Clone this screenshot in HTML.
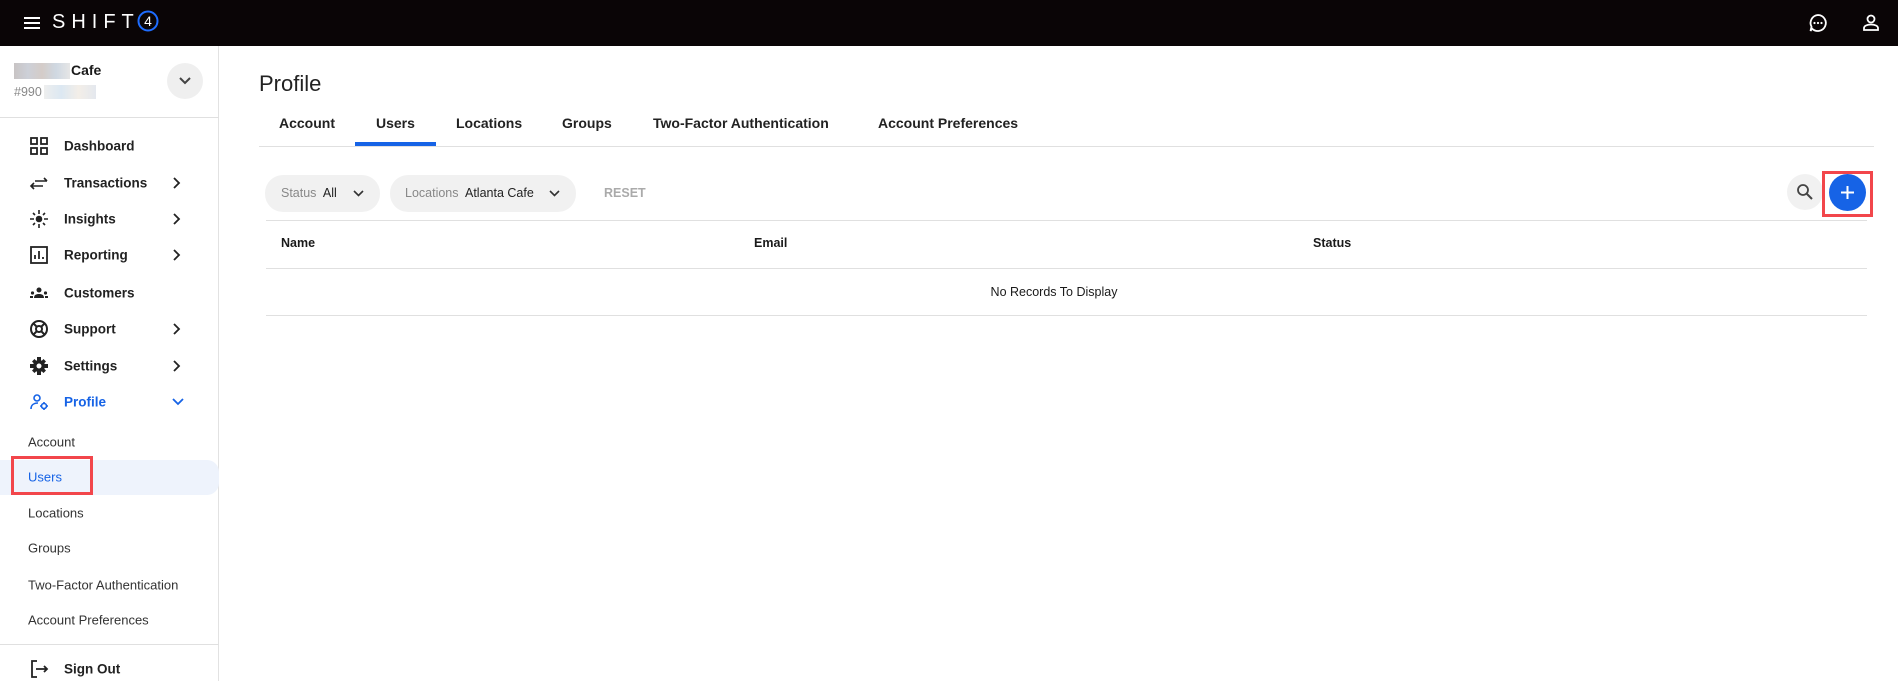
<!DOCTYPE html>
<html><head><meta charset="utf-8"><style>
*{margin:0;padding:0;box-sizing:border-box}
body{width:1898px;height:681px;overflow:hidden;background:#fff;font-family:"Liberation Sans",sans-serif;color:#1a1a1a;position:relative}
.abs{position:absolute}
.top{left:0;top:0;width:1898px;height:46px;background:#0a0506}
.side{left:0;top:46px;width:219px;height:635px;border-right:1px solid #e2e2e2}
.mi{position:absolute;left:64px;font-size:13.5px;font-weight:bold;color:#222;transform:translateY(-50%)}
.ic{position:absolute;left:29px;width:20px;height:20px;transform:translateY(-50%)}
.chev{position:absolute;left:173px;transform:translateY(-50%)}
.sub{position:absolute;left:28px;font-size:13px;color:#333;transform:translateY(-50%)}
.tab{position:absolute;top:123px;transform:translateY(-50%);font-size:14px;font-weight:bold;color:#222}
.th{position:absolute;top:243px;transform:translateY(-50%);font-size:12.5px;font-weight:bold}
.hl{position:absolute;height:2px;background:#e0e0e0}
</style></head><body>
<div class="abs top">
 <svg class="abs" style="left:23px;top:16px" width="18" height="14"><path d="M1 2h16M1 7h16M1 12h16" stroke="#fff" stroke-width="2"/></svg>
 <div class="abs" style="left:52px;top:11px;color:#fff;font-size:20px;letter-spacing:6px">SHIFT</div>
 <svg class="abs" style="left:137px;top:10px" width="22" height="22"><circle cx="11" cy="11" r="9.5" fill="none" stroke="#1e6dff" stroke-width="2"/><text x="11" y="16" fill="#fff" font-size="14" text-anchor="middle" font-family="Liberation Sans">4</text></svg>
 <svg class="abs" style="left:1808px;top:13px" width="20" height="20"><path d="M10 2a8 8 0 1 1-6 13.5L2.5 18l1-4.3A8 8 0 0 1 10 2z" fill="none" stroke="#fff" stroke-width="1.8"/><circle cx="6.5" cy="10" r="1.1" fill="#fff"/><circle cx="10" cy="10" r="1.1" fill="#fff"/><circle cx="13.5" cy="10" r="1.1" fill="#fff"/></svg>
 <svg class="abs" style="left:1862px;top:13px" width="18" height="20"><circle cx="9" cy="6" r="3.5" fill="none" stroke="#fff" stroke-width="1.8"/><path d="M2 17v-2c0-2 3-3.5 7-3.5s7 1.5 7 3.5v2z" fill="none" stroke="#fff" stroke-width="1.8"/></svg>
</div>
<div class="abs side"></div>
<div class="abs" style="left:14px;top:63px;width:56px;height:16px;background:linear-gradient(90deg,#c8c4c4,#cdd0d8,#d4ccc8,#cfd8e2,#e6e6e6)"></div>
<div class="abs" style="left:71px;top:62px;font-size:14px;font-weight:bold">Cafe</div>
<div class="abs" style="left:14px;top:85px;font-size:12.5px;color:#888">#990</div>
<div class="abs" style="left:44px;top:85px;width:52px;height:14px;background:linear-gradient(90deg,#eee,#dce8f2,#f3eee8,#e4e8ee)"></div>
<div class="abs" style="left:167px;top:63px;width:36px;height:36px;border-radius:50%;background:#efefef"></div>
<svg class="abs" style="left:179px;top:77px" width="12" height="8"><path d="M1 1l5 5 5-5" fill="none" stroke="#444" stroke-width="2"/></svg>
<div class="hl" style="left:0;top:117px;width:219px;height:1px"></div>

<svg class="ic" style="top:146px" viewBox="0 0 20 20"><g fill="none" stroke="#222" stroke-width="1.8"><rect x="2" y="2" width="6" height="6"/><rect x="12" y="2" width="6" height="6"/><rect x="2" y="12" width="6" height="6"/><rect x="12" y="12" width="6" height="6"/></g></svg>
<div class="mi" style="top:146px">Dashboard</div>
<svg class="ic" style="top:183px" viewBox="0 0 20 20"><g fill="none" stroke="#222" stroke-width="1.6"><path d="M6 8h12M15 5l3 3M2 13h12M5 10l-3 3 3 3"/></g></svg>
<div class="mi" style="top:183px">Transactions</div>
<svg class="ic" style="top:219px" viewBox="0 0 20 20"><g stroke="#222" stroke-width="1.6"><circle cx="10" cy="10" r="2.5" fill="#222"/><path d="M10 1v4M10 15v4M1 10h4M15 10h4M4 4l2 2M14 14l2 2M16 4l-2 2M4 16l2-2"/></g></svg>
<div class="mi" style="top:219px">Insights</div>
<svg class="ic" style="top:255px" viewBox="0 0 20 20"><g fill="none" stroke="#222" stroke-width="1.8"><rect x="2" y="2" width="16" height="16"/><path d="M6 14v-4M10 14V6M14 14v-2"/></g></svg>
<div class="mi" style="top:255px">Reporting</div>
<svg class="ic" style="top:293px" viewBox="0 0 20 20"><g fill="#222"><circle cx="10" cy="7" r="2.5"/><path d="M5 15c0-3 2-4 5-4s5 1 5 4z"/><circle cx="3.5" cy="10" r="1.6"/><circle cx="16.5" cy="10" r="1.6"/><rect x="1" y="13" width="3" height="2"/><rect x="16" y="13" width="3" height="2"/></g></svg>
<div class="mi" style="top:293px">Customers</div>
<svg class="ic" style="top:329px" viewBox="0 0 20 20"><g fill="none" stroke="#222" stroke-width="2"><circle cx="10" cy="10" r="8"/><circle cx="10" cy="10" r="3"/><path d="M4 4l4 4M16 4l-4 4M4 16l4-4M16 16l-4-4"/></g></svg>
<div class="mi" style="top:329px">Support</div>
<svg class="ic" style="top:366px" viewBox="0 0 20 20"><g fill="#222"><circle cx="10" cy="10" r="6"/><path d="M8 1h4v4H8zM8 15h4v4H8zM1 8h4v4H1zM15 8h4v4h-4zM3 5.5L5.5 3l3 3L6 8.5zM14.5 17l2.5-2.5-3-3-2.5 2.5zM17 5.5L14.5 3l-3 3L14 8.5zM5.5 17L3 14.5l3-3 2.5 2.5z"/></g><circle cx="10" cy="10" r="2.5" fill="#fff"/></svg>
<div class="mi" style="top:366px">Settings</div>
<svg class="ic" style="top:402px" viewBox="0 0 20 20"><g fill="none" stroke="#1663e6" stroke-width="1.6"><circle cx="8" cy="6" r="3"/><path d="M2 17c0-4 3-6 7-6"/><circle cx="15" cy="14" r="2.5"/><path d="M15 10v1.5M15 16.5V18M11 14h1.5M17.5 14H19"/></g></svg>
<div class="mi" style="top:402px;color:#1663e6">Profile</div>

<svg class="chev" style="top:183px" width="8" height="12"><path d="M1 1l5 5-5 5" fill="none" stroke="#222" stroke-width="1.8"/></svg>
<svg class="chev" style="top:219px" width="8" height="12"><path d="M1 1l5 5-5 5" fill="none" stroke="#222" stroke-width="1.8"/></svg>
<svg class="chev" style="top:255px" width="8" height="12"><path d="M1 1l5 5-5 5" fill="none" stroke="#222" stroke-width="1.8"/></svg>
<svg class="chev" style="top:329px" width="8" height="12"><path d="M1 1l5 5-5 5" fill="none" stroke="#222" stroke-width="1.8"/></svg>
<svg class="chev" style="top:366px" width="8" height="12"><path d="M1 1l5 5-5 5" fill="none" stroke="#222" stroke-width="1.8"/></svg>
<svg class="chev" style="top:402px;left:172px" width="12" height="8"><path d="M1 1l5 5 5-5" fill="none" stroke="#1663e6" stroke-width="1.8"/></svg>

<div class="abs" style="left:0;top:460px;width:219px;height:35px;background:#eef3fc;border-radius:0 12px 12px 0"></div>
<div class="sub" style="top:442px">Account</div>
<div class="sub" style="top:477px;color:#1663e6">Users</div>
<div class="sub" style="top:513px">Locations</div>
<div class="sub" style="top:548px">Groups</div>
<div class="sub" style="top:585px">Two-Factor Authentication</div>
<div class="sub" style="top:620px">Account Preferences</div>
<div class="abs" style="left:11px;top:456px;width:82px;height:39px;border:3px solid #f2464b"></div>
<div class="hl" style="left:0;top:644px;width:219px;height:1px"></div>
<svg class="ic" style="top:669px" viewBox="0 0 20 20"><g fill="none" stroke="#222" stroke-width="1.8"><path d="M8 2H3v16h5M7 10h11M15 7l3 3-3 3"/></g></svg>
<div class="mi" style="top:669px">Sign Out</div>

<div class="abs" style="left:259px;top:71px;font-size:22px;color:#222">Profile</div>
<div class="tab" style="left:279px">Account</div>
<div class="tab" style="left:376px">Users</div>
<div class="tab" style="left:456px">Locations</div>
<div class="tab" style="left:562px">Groups</div>
<div class="tab" style="left:653px">Two-Factor Authentication</div>
<div class="tab" style="left:878px">Account Preferences</div>
<div class="hl" style="left:259px;top:146px;width:1615px;height:1px"></div>
<div class="abs" style="left:355px;top:142px;width:81px;height:4px;background:#1663e6"></div>

<div class="abs" style="left:265px;top:175px;width:115px;height:37px;border-radius:18px;background:#f1f1f1"></div>
<div class="abs" style="left:281px;top:186px;font-size:12.5px;color:#888">Status <span style="color:#222;margin-left:3px">All</span></div>
<svg class="abs" style="left:353px;top:190px" width="11" height="7"><path d="M1 1l4.5 4.5L10 1" fill="none" stroke="#333" stroke-width="1.6"/></svg>
<div class="abs" style="left:390px;top:175px;width:186px;height:37px;border-radius:18px;background:#f1f1f1"></div>
<div class="abs" style="left:405px;top:186px;font-size:12.5px;color:#888">Locations <span style="color:#222;margin-left:3px">Atlanta Cafe</span></div>
<svg class="abs" style="left:549px;top:190px" width="11" height="7"><path d="M1 1l4.5 4.5L10 1" fill="none" stroke="#333" stroke-width="1.6"/></svg>
<div class="abs" style="left:604px;top:186px;font-size:12.5px;font-weight:bold;color:#aaa">RESET</div>

<div class="abs" style="left:1787px;top:174px;width:36px;height:36px;border-radius:50%;background:#f1f1f1"></div>
<svg class="abs" style="left:1796px;top:183px" width="18" height="18"><circle cx="7" cy="7" r="5" fill="none" stroke="#444" stroke-width="1.8"/><path d="M11 11l5 5" stroke="#444" stroke-width="2"/></svg>
<div class="abs" style="left:1829px;top:174px;width:37px;height:37px;border-radius:50%;background:#1663e6"></div>
<svg class="abs" style="left:1839px;top:184px" width="17" height="17"><path d="M8.5 2v13M2 8.5h13" stroke="#fff" stroke-width="2"/></svg>
<div class="abs" style="left:1822px;top:171px;width:51px;height:46px;border:3px solid #f2464b"></div>

<div class="hl" style="left:266px;top:220px;width:1601px;height:1px"></div>
<div class="th" style="left:281px">Name</div>
<div class="th" style="left:754px">Email</div>
<div class="th" style="left:1313px">Status</div>
<div class="hl" style="left:266px;top:268px;width:1601px;height:1px"></div>
<div class="abs" style="left:1054px;top:292px;transform:translate(-50%,-50%);font-size:12.5px">No Records To Display</div>
<div class="hl" style="left:266px;top:315px;width:1601px;height:1px"></div>
</body></html>
